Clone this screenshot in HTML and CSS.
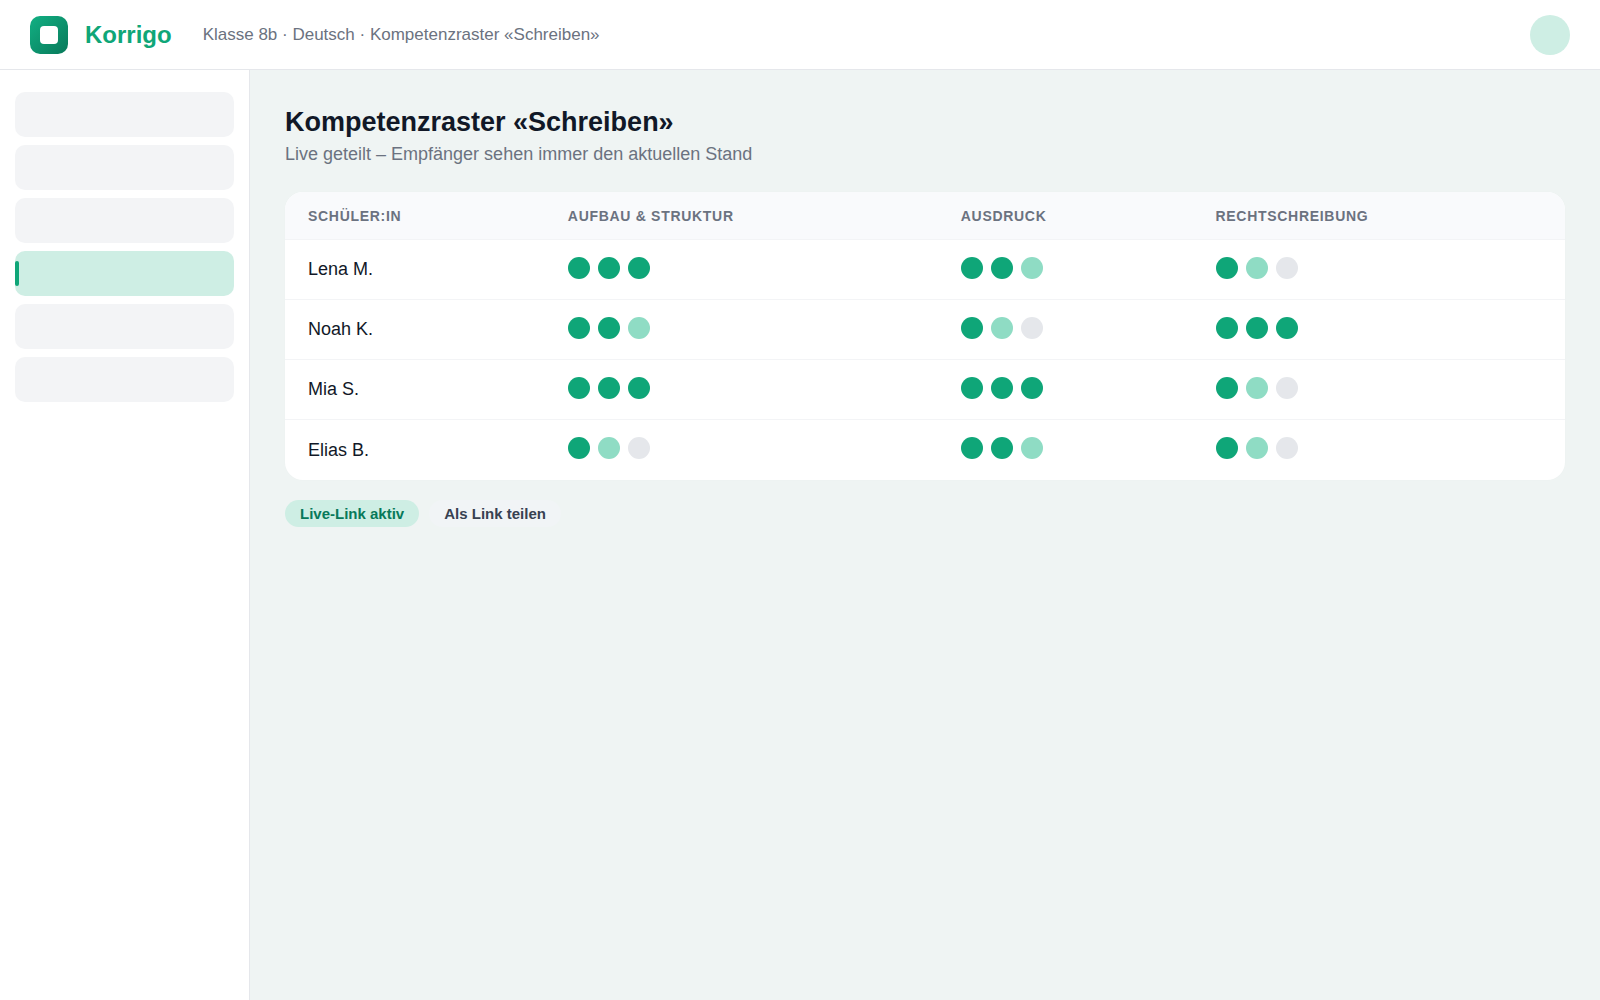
FILE: index.html
```html
<!DOCTYPE html>
<html lang="de">
<head>
    <meta charset="UTF-8">
    <meta name="viewport" content="width=device-width, initial-scale=1.0">
    <title>Korrigo</title>
    <link rel="stylesheet" href="styles.css">
</head>
<body>

<header class="topbar">
    <svg class="logo" viewBox="0 0 38 38" aria-hidden="true">
        <defs>
            <linearGradient id="logoFill" x1="0" y1="0" x2="1" y2="1">
                <stop offset="0" stop-color="#12b083"/>
                <stop offset="1" stop-color="#08795a"/>
            </linearGradient>
        </defs>
        <rect width="38" height="38" rx="10" fill="url(#logoFill)"/>
        <rect x="10" y="10" width="18" height="18" rx="4" fill="#fff"/>
    </svg>
    <span class="brand">Korrigo</span>
    <span class="crumb">Klasse 8b · Deutsch · Kompetenzraster «Schreiben»</span>
    <span class="avatar"></span>
</header>

<div class="layout">
    <nav class="sidebar">
        <div class="nav-item"></div>
        <div class="nav-item"></div>
        <div class="nav-item"></div>
        <div class="nav-item active"></div>
        <div class="nav-item"></div>
        <div class="nav-item"></div>
    </nav>

    <main class="content">
        <h1>Kompetenzraster «Schreiben»</h1>
        <p class="subtitle">Live geteilt – Empfänger sehen immer den aktuellen Stand</p>

        <div class="card">
            <table>
                <thead>
                    <tr>
                        <th class="col-name">Schüler:in</th>
                        <th class="col-structure">Aufbau &amp; Struktur</th>
                        <th class="col-expression">Ausdruck</th>
                        <th>Rechtschreibung</th>
                    </tr>
                </thead>
                <tbody>
                    <tr>
                        <td>Lena M.</td>
                        <td><div class="dots"><i class="dot full"></i><i class="dot full"></i><i class="dot full"></i></div></td>
                        <td><div class="dots"><i class="dot full"></i><i class="dot full"></i><i class="dot half"></i></div></td>
                        <td><div class="dots"><i class="dot full"></i><i class="dot half"></i><i class="dot"></i></div></td>
                    </tr>
                    <tr>
                        <td>Noah K.</td>
                        <td><div class="dots"><i class="dot full"></i><i class="dot full"></i><i class="dot half"></i></div></td>
                        <td><div class="dots"><i class="dot full"></i><i class="dot half"></i><i class="dot"></i></div></td>
                        <td><div class="dots"><i class="dot full"></i><i class="dot full"></i><i class="dot full"></i></div></td>
                    </tr>
                    <tr>
                        <td>Mia S.</td>
                        <td><div class="dots"><i class="dot full"></i><i class="dot full"></i><i class="dot full"></i></div></td>
                        <td><div class="dots"><i class="dot full"></i><i class="dot full"></i><i class="dot full"></i></div></td>
                        <td><div class="dots"><i class="dot full"></i><i class="dot half"></i><i class="dot"></i></div></td>
                    </tr>
                    <tr>
                        <td>Elias B.</td>
                        <td><div class="dots"><i class="dot full"></i><i class="dot half"></i><i class="dot"></i></div></td>
                        <td><div class="dots"><i class="dot full"></i><i class="dot full"></i><i class="dot half"></i></div></td>
                        <td><div class="dots"><i class="dot full"></i><i class="dot half"></i><i class="dot"></i></div></td>
                    </tr>
                </tbody>
            </table>
        </div>

        <div class="actions">
            <span class="pill pill-active">Live-Link aktiv</span>
            <button type="button" class="pill">Als Link teilen</button>
        </div>
    </main>
</div>

</body>
</html>
```
FILE: styles.css
```css
* {
    box-sizing: border-box;
}
body {
    font-family: "Liberation Sans", Helvetica, Arial, sans-serif;
    font-size: 18px;
    color: #111827;
    background-color: #eff4f3;
    display: flex;
    flex-direction: column;
    min-height: 100vh;
    margin: 0;
}
.topbar {
    display: flex;
    align-items: center;
    padding: 15px 30px 14px;
    background-color: #fff;
    border-bottom: 1px solid #e5e7eb;
}
.logo {
    width: 38px;
    height: 38px;
    margin-right: 17px;
}
.brand {
    font-size: 24px;
    font-weight: 700;
    color: #0fa678;
    margin-right: 31px;
}
.crumb {
    font-size: 17px;
    color: #6b7280;
}
.avatar {
    width: 40px;
    height: 40px;
    margin-left: auto;
    border-radius: 50%;
    background-color: #ceeee4;
}
.layout {
    display: flex;
    flex: 1;
}
.sidebar {
    width: 250px;
    flex-shrink: 0;
    display: flex;
    flex-direction: column;
    gap: 8px;
    padding: 22px 15px;
    background-color: #fff;
    border-right: 1px solid #e5e7eb;
}
.nav-item {
    display: flex;
    align-items: center;
    height: 45px;
    border-radius: 10px;
    background-color: #f3f4f6;
}
.nav-item.active {
    background-color: #ceeee4;
}
.nav-item.active::before {
    content: "";
    width: 4px;
    height: 25px;
    border-radius: 2px;
    background-color: #0fa678;
}
.content {
    flex: 1;
    padding: 35px;
}
h1 {
    margin: 0;
    font-size: 27px;
    line-height: 34px;
    font-weight: 700;
}
.subtitle {
    margin: 4px 0 27px;
    line-height: 22px;
    color: #6b7280;
}
.card {
    background-color: #fff;
    border-radius: 18px;
    overflow: hidden;
    box-shadow: 0 0 2px rgba(0, 0, 0, 0.02);
}
table {
    width: 100%;
    border-spacing: 0;
    table-layout: fixed;
}
th, td {
    padding: 0 23px;
    text-align: left;
    border-bottom: 1px solid #f3f4f6;
}
th {
    height: 48px;
    font-size: 14px;
    letter-spacing: 0.05em;
    text-transform: uppercase;
    color: #6b7280;
    background-color: #f9fafc;
}
td {
    height: 60px;
}
tbody tr:last-child td {
    border-bottom: none;
}
.col-name {
    width: 20.3%;
}
.col-structure {
    width: 30.7%;
}
.col-expression {
    width: 19.9%;
}
.dots {
    display: flex;
    gap: 8px;
    padding-bottom: 4px;
}
.dot {
    width: 22px;
    height: 22px;
    border-radius: 50%;
    background-color: #e5e7eb;
}
.dot.full {
    background-color: #0fa678;
}
.dot.half {
    background-color: #8fdcc4;
}
.actions {
    display: flex;
    gap: 10px;
    margin-top: 20px;
}
.pill {
    padding: 0 15px;
    border: none;
    border-radius: 14px;
    font-family: inherit;
    font-size: 15px;
    font-weight: 700;
    line-height: 27px;
    color: #374151;
    background-color: #f1f4f6;
}
button.pill {
    cursor: pointer;
}
.pill-active {
    color: #08795a;
    background-color: #ceeee4;
}
```
